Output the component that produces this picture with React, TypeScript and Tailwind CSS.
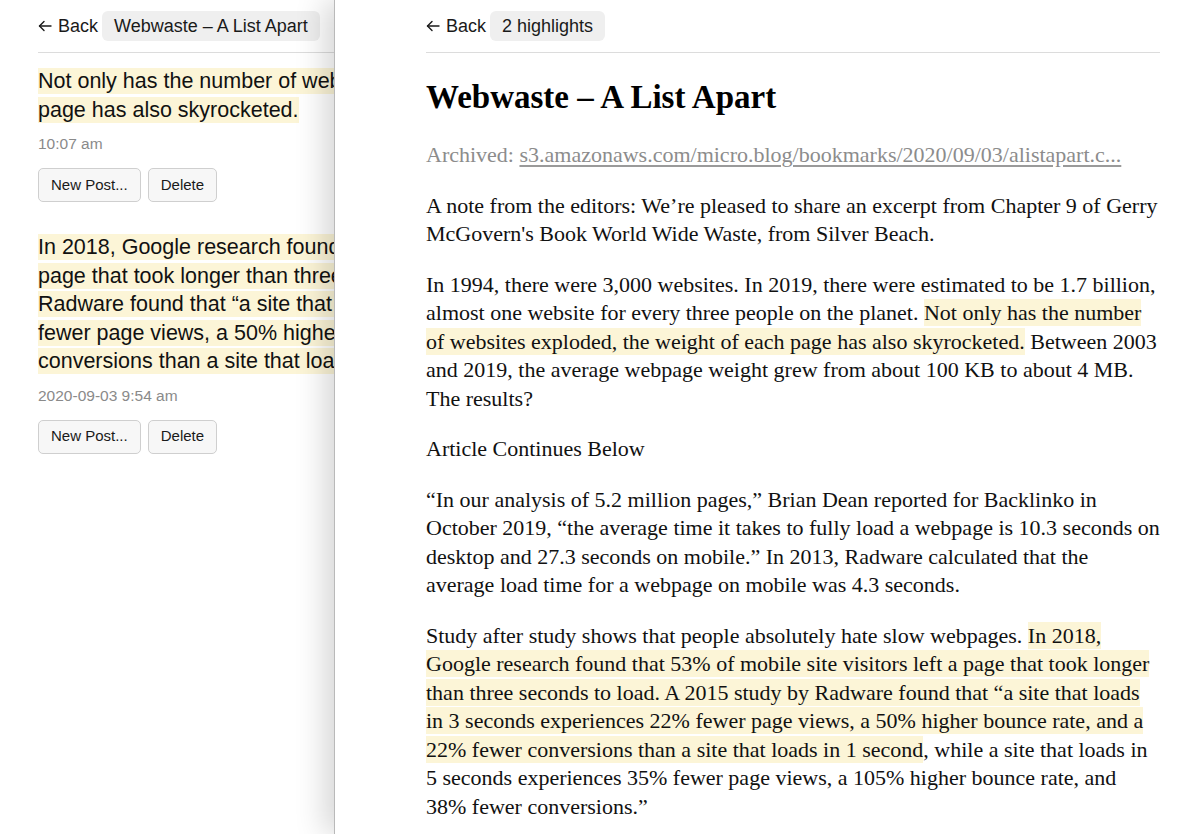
const sans = "font-['Liberation_Sans',Arial,sans-serif]";
const serif = "font-['Liberation_Serif','Times_New_Roman',serif]";

const Mark = ({ children }: { children: React.ReactNode }) => (
  <span className="bg-[#fcf5d7] py-[1px] [box-decoration-break:clone]">{children}</span>
);

const BackArrow = () => (
  <svg width="14" height="12" viewBox="0 0 14 12" fill="none" stroke="currentColor" strokeWidth="1.4" strokeLinecap="round" strokeLinejoin="round">
    <path d="M13 6H1.5" />
    <path d="M6 1.5 1.5 6 6 10.5" />
  </svg>
);

const Header = ({ label }: { label: string }) => (
  <div className={`flex items-center gap-[4px] pt-[11px] pb-[11px] border-b border-[#dcdcdc] text-[18px] text-[#1a1a1a] ${sans}`}>
    <span className="flex items-center gap-[6px]">
      <BackArrow />
      Back
    </span>
    <span className="h-[30px] flex items-center px-3 rounded-[6px] bg-[#efefef]">{label}</span>
  </div>
);

const Buttons = () => (
  <div className="flex gap-[7px]">
    <button className="h-[34px] px-3 rounded-[5px] border border-[#cfcfcf] bg-[#f7f7f7] text-[15px] text-[#1a1a1a]">
      New Post...
    </button>
    <button className="h-[34px] px-3 rounded-[5px] border border-[#cfcfcf] bg-[#f7f7f7] text-[15px] text-[#1a1a1a]">
      Delete
    </button>
  </div>
);

const HighlightItem = ({ text, time }: { text: string; time: string }) => (
  <div className={`${sans}`}>
    <p className="text-[21.5px] leading-[28.5px] text-[#111]">
      <span className="bg-[#fcf5d7] py-[1px] [box-decoration-break:clone]">{text}</span>
    </p>
    <div className="mt-[10px] text-[15.5px] leading-[20px] text-[#8a8a8a]">{time}</div>
    <div className="mt-[14px]">
      <Buttons />
    </div>
  </div>
);

const HighlightsPanel = () => (
  <div className="w-[334px] shrink-0 overflow-hidden bg-white">
    <div className="w-[760px] px-[38px]">
      <Header label="Webwaste – A List Apart" />
      <div className="w-[665px] pt-[14px] flex flex-col gap-[31px]">
        <HighlightItem
          text="Not only has the number of websites exploded, the weight of each page has also skyrocketed."
          time="10:07 am"
        />
        <HighlightItem
          text="In 2018, Google research found that 53% of mobile site visitors left a page that took longer than three seconds to load. A 2015 study by Radware found that “a site that loads in 3 seconds experiences 22% fewer page views, a 50% higher bounce rate, and a 22% fewer conversions than a site that loads in 1 second"
          time="2020-09-03 9:54 am"
        />
      </div>
    </div>
  </div>
);

const ArticlePanel = () => (
  <div className="relative z-10 flex-1 bg-white border-l border-[#b9b9b9] shadow-[-10px_0_28px_rgba(0,0,0,0.16)] pl-[91px] pr-[40px]">
    <Header label="2 highlights" />
    <article className={`${serif} text-[#111]`}>
      <h1 className="mt-[24px] text-[33px] leading-[40px] font-bold text-black">Webwaste – A List Apart</h1>
      <p className="mt-[24px] text-[22px] leading-[28.5px] text-[#8c8c8c]">
        Archived:{" "}
        <span className="underline decoration-[#9a9a9a] underline-offset-[3px]">
          s3.amazonaws.com/micro.blog/bookmarks/2020/09/03/alistapart.c...
        </span>
      </p>
      <div className="mt-[22px] flex flex-col gap-[22px] text-[22px] leading-[28.5px]">
        <p>
          A note from the editors: We’re pleased to share an excerpt from Chapter 9 of Gerry McGovern's Book World
          Wide Waste, from Silver Beach.
        </p>
        <p>
          In 1994, there were 3,000 websites. In 2019, there were estimated to be 1.7 billion, almost one website for
          every three people on the planet.{" "}
          <Mark>Not only has the number of websites exploded, the weight of each page has also skyrocketed.</Mark>{" "}
          Between 2003 and 2019, the average webpage weight grew from about 100 KB to about 4 MB. The results?
        </p>
        <p>Article Continues Below</p>
        <p>
          “In our analysis of 5.2 million pages,” Brian Dean reported for Backlinko in October 2019, “the average time
          it takes to fully load a webpage is 10.3 seconds on desktop and 27.3 seconds on mobile.” In 2013, Radware
          calculated that the average load time for a webpage on mobile was 4.3 seconds.
        </p>
        <p>
          Study after study shows that people absolutely hate slow webpages.{" "}
          <Mark>
            In 2018, Google research found that 53% of mobile site visitors left a page that took longer than three
            seconds to load. A 2015 study by Radware found that “a site that loads in 3 seconds experiences 22% fewer
            page views, a 50% higher bounce rate, and a 22% fewer conversions than a site that loads in 1 second
          </Mark>
          , while a site that loads in 5 seconds experiences 35% fewer page views, a 105% higher bounce rate, and 38%
          fewer conversions.”
        </p>
      </div>
    </article>
  </div>
);

export default function App() {
  return (
    <div className="flex h-[834px] w-[1200px] overflow-hidden bg-white">
      <HighlightsPanel />
      <ArticlePanel />
    </div>
  );
}
